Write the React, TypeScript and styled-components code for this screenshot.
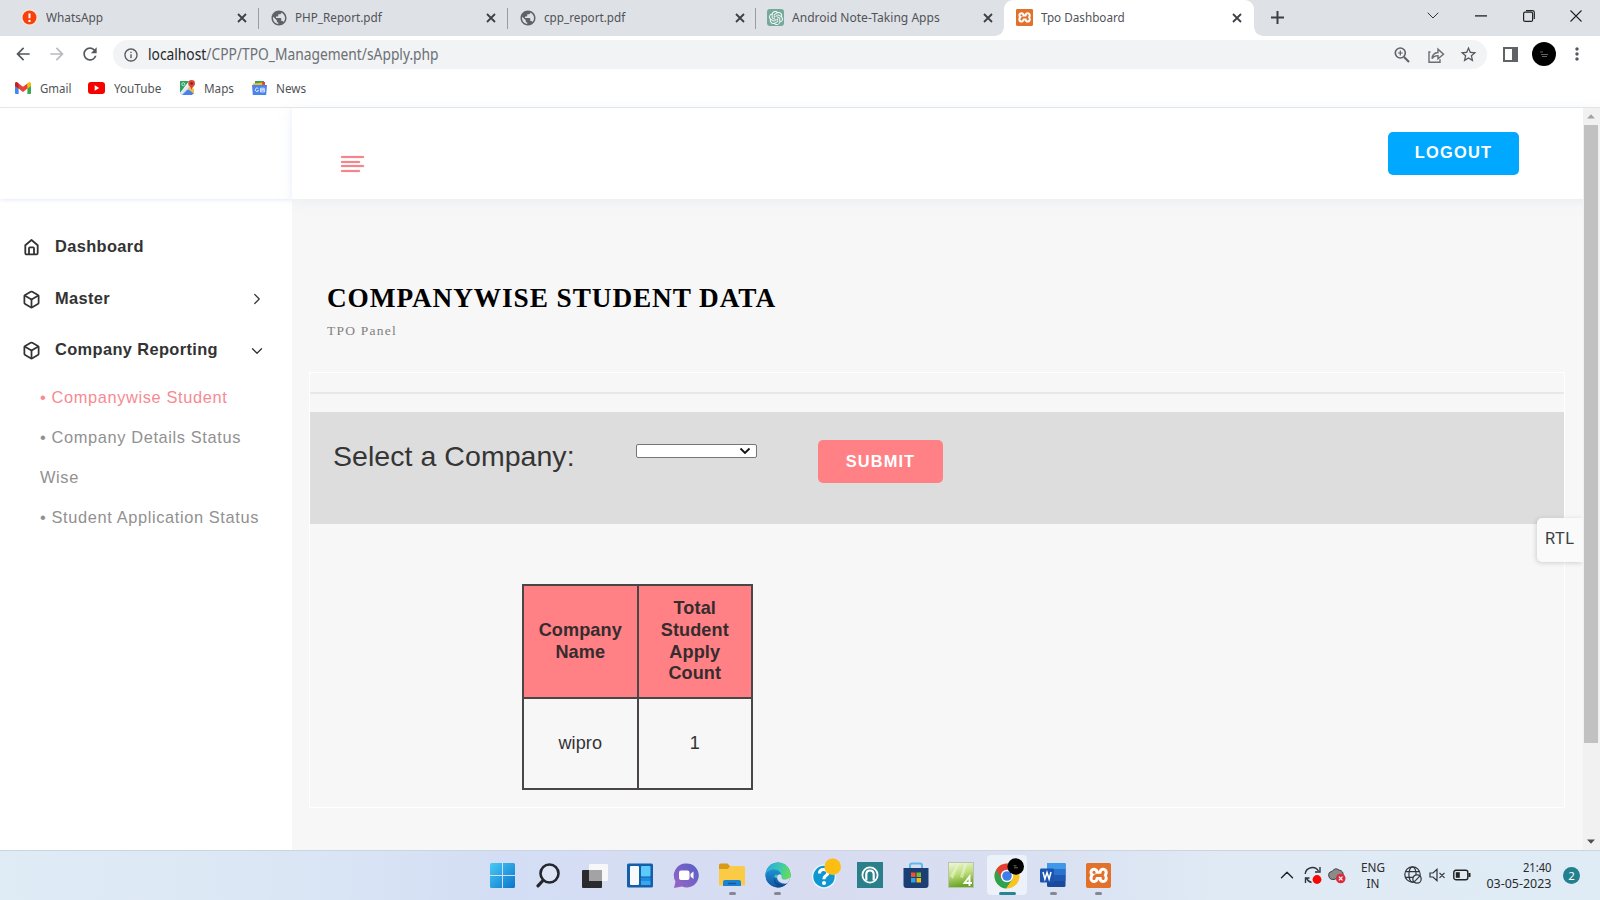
import React from "react";
import styled, { createGlobalStyle, css } from "styled-components";
import { Box, ChevronDown, ChevronRight, ChevronUp } from "lucide-react";
import { MdPublic, MdRefresh, MdArrowBack, MdArrowForward, MdInfoOutline, MdMoreVert, MdStarOutline } from "react-icons/md";
import { SiOpenai, SiXampp } from "react-icons/si";

const ui = `"Noto Sans", "Open Sans", sans-serif`;
const arial = `"Liberation Sans", Arial, sans-serif`;
const times = `"Liberation Serif", "Times New Roman", serif`;

const Global = createGlobalStyle`
  * { box-sizing: border-box; }
  html, body { margin: 0; padding: 0; background: #fff; overflow: hidden; }
  svg { display: block; flex: none; }
`;

const Screen = styled.div`
  width: 1600px;
  height: 900px;
  display: flex;
  flex-direction: column;
  overflow: hidden;
  font-family: ${arial};
  color: #333;
`;

const UiText = styled.span<{ $size?: number; $squeeze?: number }>`
  display: block;
  font-family: ${ui};
  font-size: ${(p) => p.$size ?? 13}px;
  line-height: 18px;
  white-space: nowrap;
  color: #505357;
  transform: scaleX(${(p) => p.$squeeze ?? 0.9});
  transform-origin: left center;
`;

/* ---------- browser chrome ---------- */

const TabStrip = styled.header`
  height: 36px;
  flex: none;
  display: flex;
  background: #dee1e6;
`;

const Tab = styled.div<{ $width: number; $active?: boolean; $divider?: boolean }>`
  position: relative;
  width: ${(p) => p.$width}px;
  display: flex;
  align-items: center;
  flex: none;
  padding-bottom: 1px;
  ${(p) => p.$divider && css`
    &::after {
      content: "";
      position: absolute;
      right: 0;
      top: 8px;
      width: 1px;
      height: 21px;
      background: #9a9da2;
    }
  `}
  ${(p) => p.$active && css`
    background: #fff;
    border-radius: 9px 9px 0 0;
    &::before, &::after {
      content: "";
      position: absolute;
      bottom: 0;
      width: 9px;
      height: 9px;
    }
    &::before { left: -9px; background: radial-gradient(circle at 0 0, transparent 8.5px, #fff 9px); }
    &::after { right: -9px; background: radial-gradient(circle at 100% 0, transparent 8.5px, #fff 9px); }
  `}
`;

const Favicon = styled.span<{ $left: number }>`
  width: 17px;
  margin-left: ${(p) => p.$left}px;
  display: flex;
  justify-content: center;
  flex: none;
  color: #5f6368;
`;

const TabTitle = styled(UiText)`
  margin-left: 8px;
  padding-bottom: 2px;
  flex: 1;
  min-width: 0;
`;

const TabClose = styled.span<{ $right: number }>`
  margin-right: ${(p) => p.$right}px;
  flex: none;
`;

const GreenTile = styled.span`
  width: 17px;
  height: 17px;
  display: flex;
  align-items: center;
  justify-content: center;
  border-radius: 3px;
  background: #75a99a;
  color: #fff;
`;

const OrangeTile = styled.span<{ $size: number }>`
  width: ${(p) => p.$size}px;
  height: ${(p) => p.$size}px;
  display: flex;
  align-items: center;
  justify-content: center;
  border-radius: 2px;
  background: #fff;
  color: #e2712b;
  box-shadow: inset 0 0 0 2px #e2712b;
`;

const NewTab = styled.div`
  width: 46px;
  padding-bottom: 1px;
  display: flex;
  align-items: center;
  justify-content: center;
`;

const WindowButtons = styled.div`
  margin-left: auto;
  display: flex;
  height: 31px;
`;

const WindowButton = styled.div`
  width: 47.6px;
  display: flex;
  align-items: center;
  justify-content: center;
`;

const Toolbar = styled.div`
  height: 36px;
  flex: none;
  display: flex;
  align-items: center;
  background: #fff;
  color: #55585d;
`;

const NavButtons = styled.div`
  width: 113px;
  display: flex;
  align-items: center;
  padding-left: 13px;
  gap: 13.5px;
`;

const Omnibox = styled.div`
  width: 1374px;
  height: 29px;
  margin-top: 1px;
  border-radius: 15px;
  background: #f1f3f4;
  display: flex;
  align-items: center;
  padding: 0 9px 0 10px;
`;

const Url = styled(UiText)`
  margin-left: 9px;
  padding-bottom: 1px;
  flex: 1;
  color: #6c7075;
  b { font-weight: 400; color: #25282c; }
`;

const OmniActions = styled.div`
  display: flex;
  align-items: center;
  gap: 14px;
  svg:first-child { margin-right: 2px; }
`;

const ToolbarEnd = styled.div`
  flex: 1;
  display: flex;
  align-items: center;
  padding-left: 16px;
`;

const Avatar = styled.div`
  width: 24px;
  height: 24px;
  margin-left: 14px;
  margin-right: 11px;
  border-radius: 50%;
  background: #000;
  color: #aaa;
  display: flex;
  align-items: center;
  justify-content: center;
`;

const Bookmarks = styled.nav`
  height: 36px;
  flex: none;
  display: flex;
  align-items: center;
  padding: 0 0 4px 15px;
  border-bottom: 1px solid #e6e7e8;
  background: #fff;
`;

const Bookmark = styled.div<{ $width: number }>`
  width: ${(p) => p.$width}px;
  display: flex;
  align-items: center;
  gap: 8.5px;
`;

/* ---------- page ---------- */

const Page = styled.div`
  height: 742px;
  flex: none;
  display: flex;
  background: #f7f7f7;
`;

const Sidebar = styled.aside`
  width: 292px;
  flex: none;
  background: #fff;
  display: flex;
  flex-direction: column;
`;

const Brand = styled.div`
  height: 91px;
  flex: none;
  box-shadow: inset -4px 0 6px -3px #f6f8fd, 0 1px 4px 0 #e6eaf6;
`;

const Menu = styled.nav`
  padding: 21.5px 0 0 22px;
`;

const MenuItem = styled.div`
  height: 51.8px;
  display: flex;
  align-items: center;
  padding-right: 26px;
  font-size: 16.4px;
  font-weight: 700;
  letter-spacing: 0.37px;
  color: #333;
  svg { margin-top: 2px; }
`;

const MenuIcon = styled.span`
  width: 33px;
  flex: none;
`;

const MenuLabel = styled.span`
  flex: 1;
`;

const SubMenu = styled.ul`
  list-style: none;
  margin: 0;
  padding: 0.9px 0 0 18px;
  width: 245px;
`;

const SubItem = styled.li<{ $active?: boolean }>`
  font-size: 16.4px;
  line-height: 40px;
  letter-spacing: 0.62px;
  color: ${(p) => (p.$active ? "#f78a91" : "#919191")};
`;

const Main = styled.main`
  flex: 1;
  display: flex;
  flex-direction: column;
  position: relative;
`;

const TopBar = styled.div`
  height: 91px;
  flex: none;
  display: flex;
  justify-content: space-between;
  align-items: flex-start;
  padding: 24px 81px 0 49px;
  background: #fff;
  box-shadow: 0 2px 14px rgba(170, 184, 215, 0.15);
`;

const Hamburger = styled.div`
  display: flex;
  flex-direction: column;
  gap: 2.6px;
  padding-top: 24px;
  i { display: block; height: 2px; width: 23px; border-radius: 1px; background: #f4868b; box-shadow: 0 0 1px #f4868b; }
  i:nth-child(even) { width: 18.5px; }
`;

const Button = styled.button<{ $tone: string; $width: number; $spacing: number; $lift?: number }>`
  width: ${(p) => p.$width}px;
  height: 43px;
  border: 0;
  padding: 0 0 ${(p) => p.$lift ?? 1}px;
  border-radius: 5px;
  background: ${(p) => p.$tone};
  color: #fff;
  font: 700 16.4px ${arial};
  letter-spacing: ${(p) => p.$spacing}px;
`;

const Heading = styled.div`
  padding: 83px 0 0 35px;
  height: 173px;
  flex: none;
`;

const Title = styled.h1`
  margin: 0;
  font: 700 27.3px/32px ${times};
  letter-spacing: 0.91px;
  color: #000;
`;

const Subtitle = styled.p`
  margin: 9px 0 0;
  font: 13.5px/16px ${times};
  letter-spacing: 1.22px;
  color: #808080;
`;

const Card = styled.section`
  width: 1256px;
  height: 436px;
  margin-left: 17px;
  border: 1px solid #fff;
`;

const Rule = styled.hr`
  margin: 19px 0 18px;
  border: 0;
  height: 2px;
  background: #e8e8e8;
`;

const Filter = styled.form`
  height: 112px;
  background: #ddd;
  display: flex;
  align-items: flex-start;
  padding: 28px 0 0 23px;
`;

const FilterLabel = styled.label`
  width: 303px;
  font-size: 28.5px;
  line-height: 33px;
  letter-spacing: 0.05px;
  color: #353535;
`;

const SelectBox = styled.div`
  width: 121px;
  height: 14px;
  margin: 4px 61px 0 0;
  border: 1px solid #767676;
  border-radius: 2px;
  background: #fff;
  color: #000;
  display: flex;
  align-items: center;
  justify-content: flex-end;
  padding-right: 5px;
`;

const Table = styled.table`
  margin: 60px 0 0 212px;
  width: 231px;
  height: 206px;
  table-layout: fixed;
  border-collapse: collapse;
  font-size: 18.1px;
  line-height: 21.7px;
  text-align: center;
  letter-spacing: 0.1px;
  th, td { border: 2px solid #4a4646; padding: 0 18px; }
  th { height: 113px; padding: 0 14px; background: #ff8085; font-weight: 700; color: #352c2d; }
`;

const RtlToggle = styled.div`
  position: absolute;
  right: 17px;
  top: 410px;
  width: 46px;
  height: 44px;
  padding-left: 8px;
  border-radius: 5px 0 0 5px;
  background: #fafafa;
  box-shadow: -1px 1px 5px rgba(0, 0, 0, 0.16);
  font: 16.4px/42px Roboto, sans-serif;
  letter-spacing: 0.5px;
  color: #3d4145;
  clip-path: inset(-8px 0 -8px -8px);
`;

const ScrollBar = styled.div`
  position: absolute;
  right: 0;
  top: 0;
  width: 17px;
  height: 742px;
  padding: 6px 2px 6px 1px;
  background: #f1f1f1;
  display: flex;
  flex-direction: column;
  align-items: center;
`;

const ScrollThumb = styled.div`
  width: 14px;
  height: 618px;
  margin: 6px 0 auto;
  background: #c1c1c1;
`;

/* ---------- taskbar ---------- */

const Taskbar = styled.footer`
  height: 50px;
  flex: none;
  display: flex;
  padding-left: 480px;
  border-top: 1px solid #ccd4df;
  background: linear-gradient(90deg, #dfebf5 0%, #dce7f5 16%, #d3def4 31%, #d8dcf1 52%, #d9e0f1 64%, #dfeaf5 76%, #dfebf5 100%);
`;

const Apps = styled.div`
  display: flex;
  padding-bottom: 1px;
`;

const AppSlot = styled.div<{ $open?: boolean; $current?: boolean }>`
  position: relative;
  width: 45.85px;
  display: flex;
  align-items: center;
  justify-content: center;
  ${(p) => p.$current && css`
    &::before {
      content: "";
      position: absolute;
      inset: 4px 3px 4px;
      border-radius: 4px;
      background: #edf1fa;
    }
  `}
  ${(p) => (p.$open || p.$current) && css`
    &::after {
      content: "";
      position: absolute;
      left: 50%;
      bottom: 4px;
      height: 3px;
      width: ${p.$current ? 17 : 7}px;
      margin-left: ${p.$current ? -8.5 : -3.5}px;
      border-radius: 2px;
      background: ${p.$current ? "#2a8592" : "#858894"};
    }
  `}
  svg { position: relative; }
`;

const Tray = styled.div`
  margin-left: auto;
  width: 330px;
  display: flex;
  align-items: center;
  padding-bottom: 1px;
  color: #222;
`;

const TraySlot = styled.div<{ $width: number }>`
  width: ${(p) => p.$width}px;
  flex: none;
  display: flex;
  justify-content: center;
`;

const TrayLines = styled.div<{ $width: number; $align: "center" | "right" }>`
  width: ${(p) => p.$width}px;
  flex: none;
  text-align: ${(p) => p.$align};
  span { color: #2b2b2b; line-height: 16.5px; transform-origin: ${(p) => p.$align} center; }
`;

const Badge = styled.div`
  width: 17px;
  height: 17px;
  margin-left: 11.5px;
  border-radius: 50%;
  background: #23808d;
  color: #fff;
  font: 11.5px/17px ${ui};
  text-align: center;
`;

/* ---------- drawings ---------- */

const Cross = () => (
  <svg width="10" height="10" viewBox="0 0 10 10" stroke="#3c4043" strokeWidth="1.8"><path d="M1 1l8 8M9 1l-8 8" /></svg>
);

const Alert = () => (
  <svg width="17" height="17" viewBox="0 0 17 17">
    <circle cx="8.5" cy="8.5" r="8.3" fill="#fbe6e1" /><circle cx="8.5" cy="8.5" r="7" fill="#f8400c" />
    <path d="M8.5 4.4v4.8" stroke="#fff" strokeWidth="2" /><circle cx="8.5" cy="11.9" r="1.2" fill="#fff" />
  </svg>
);

const Xampp = ({ size }: { size: number }) => (
  <OrangeTile $size={size}><SiXampp size={size} /></OrangeTile>
);

const Gmail = () => (
  <svg width="16" height="12" viewBox="0 0 16 12">
    <path d="M0 1.5V11q0 1 1 1h2.6V4z" fill="#4285f4" /><path d="M16 1.5V11q0 1-1 1h-2.6V4z" fill="#34a853" />
    <path d="M12.4 1.2L14 .2q2-.5 2 1.8v2l-3.6 2.7z" fill="#fbbc04" />
    <path d="M0 4V2Q0-.3 2 .2l6 4.6L12.4 1.4v5.2L8 10 3.6 6.6z" fill="#ea4335" /><path d="M0 4V2Q0 .2 1.6.1L3.6 1.6v5z" fill="#c5221f" />
  </svg>
);

const YouTube = () => (
  <svg width="17" height="12" viewBox="0 0 17 12"><rect width="17" height="12" rx="3" fill="#f60000" /><path d="M6.7 3.3v5.4L11.2 6z" fill="#fff" /></svg>
);

const Maps = () => (
  <svg width="15" height="15" viewBox="0 0 15 15">
    <path d="M0 1h9L0 13z" fill="#2da160" /><path d="M0 14L8 6l6 8z" fill="#4a80ee" /><path d="M0 13l9-9 2 3-8 8H1z" fill="#dfe6ef" />
    <path d="M2 15l5.5-5.4L13 15z" fill="#4a80ee" /><path d="M9 7l5 2v4.5L7.8 9z" fill="#f4c136" />
    <path d="M11.6 0a3.4 3.4 0 0 1 3.4 3.4C15 6 12.2 6.6 11.6 10 11 6.6 8.2 6 8.2 3.4A3.4 3.4 0 0 1 11.6 0z" fill="#dc4437" />
    <circle cx="11.6" cy="3.4" r="1.2" fill="#7d1f18" /><circle cx="3.3" cy="4.2" r="1.5" fill="none" stroke="#cfeeda" strokeWidth=".9" />
  </svg>
);

const News = () => (
  <svg width="15" height="14" viewBox="0 0 15 14">
    <rect x="3" y="0" width="9" height="6" fill="#2fa45c" /><rect x="9" y="1" width="4" height="4" fill="#ea4335" /><path d="M1 2.5l9-1 .5 4H1z" fill="#f8bd1c" />
    <path d="M0 4h15l-.8 10H.8z" fill="#4c84ee" />
    <g fill="none" stroke="#d9e5ff" strokeWidth="1"><path d="M6.400 7.600a1.800 1.800 0 1 0 .300 1.900H5.300M8.500 7.200h3.800v1.700H8.500zM8.500 8.900h4v2h-4z" /></g>
  </svg>
);

const House = () => (
  <svg width="18" height="19" viewBox="-1 0 18 19" fill="none" stroke="#333" strokeWidth="1.8" strokeLinejoin="round">
    <path d="M2.300 7.200L8.500 2l6.200 5.200V15q0 1.400-1.400 1.400H3.700Q2.300 16.400 2.300 15z" /><path d="M6 16V10.300q0-1 1-1h3q1 0 1 1V16" />
  </svg>
);

const Magnifier = () => (
  <svg width="18" height="18" viewBox="0 0 18 18" fill="none" stroke="#5f6368" strokeWidth="1.600">
    <circle cx="7.300" cy="7" r="5" /><path d="M11 11l5 5" strokeWidth="2.100" /><path d="M7.300 4.600v4.800M4.900 7h4.800" strokeWidth="1.200" />
  </svg>
);

const Share = () => (
  <svg width="18" height="18" viewBox="0 0 18 18" fill="none" stroke="#6a6e73" strokeWidth="1.400">
    <path d="M3.500 6H2v10.200h11v-3" /><path d="M5 12.500Q5.500 7 11 6.500V3.200l5.500 5-5.500 4.600V9.600Q7 9.500 5 12.500z" />
  </svg>
);

const SidePanel = () => (
  <svg width="15" height="15" viewBox="0 0 15 15"><path d="M1 1h13v13H1z" fill="none" stroke="#5f6368" strokeWidth="2" /><path d="M9 1h5v13H9z" fill="#5f6368" /></svg>
);

const Start = () => (
  <svg width="25" height="25" viewBox="0 0 25 25">
    <defs><linearGradient id="win" x1="0" y1="0" x2="25" y2="25" gradientUnits="userSpaceOnUse"><stop offset="0" stopColor="#48cbf5" /><stop offset="1" stopColor="#0b74cb" /></linearGradient></defs>
    <path d="M1.500 0H12v12H0V1.500Q0 0 1.500 0zM13 0h10.500Q25 0 25 1.500V12H13zM0 13h12v12H1.500Q0 25 0 23.500zM13 13h12v10.500q0 1.500-1.500 1.500H13z" fill="url(#win)" />
  </svg>
);

const Search = () => (
  <svg width="25" height="25" viewBox="0 0 25 25" fill="none" stroke="#24272d" strokeLinecap="round">
    <circle cx="13.500" cy="10.500" r="9" fill="#dfe5f4" strokeWidth="2.600" /><path d="M7 17.500L2 22.800" strokeWidth="3.200" />
  </svg>
);

const TaskView = () => (
  <svg width="26" height="25" viewBox="0 0 26 25">
    <rect x="0" y="7" width="20" height="18" rx="1" fill="#2b2b2d" /><rect x="7" y="1" width="19" height="17" rx="1" fill="#f7f7f8" /><path d="M7 7h13v11H7z" fill="#a3a3a6" />
  </svg>
);

const Widgets = () => (
  <svg width="26" height="25" viewBox="0 0 26 25">
    <rect width="26" height="24" y=".5" rx="1.500" fill="#155fa8" /><rect x="3" y="3" width="9" height="19" rx="1" fill="#f8f9fb" />
    <rect x="14" y="3" width="9.500" height="10.500" rx="1" fill="#5ccbfb" /><rect x="14" y="14.500" width="9.500" height="3.500" fill="#1c8de0" /><rect x="14" y="18" width="9.500" height="4" fill="#38a8ee" />
  </svg>
);

const Chat = () => (
  <svg width="26" height="25" viewBox="0 0 26 25">
    <defs><linearGradient id="chat" x1="0" y1="1" x2="1" y2="0"><stop offset="0" stopColor="#9a64c6" /><stop offset="1" stopColor="#5560c4" /></linearGradient></defs>
    <path d="M13 .500a12 12 0 1 1-4 23L1 25l1.500-6.500A12 12 0 0 1 13 .500z" fill="url(#chat)" />
    <rect x="6" y="7.500" width="10.500" height="9.500" rx="2" fill="#fff" /><path d="M17.500 11l3-2.500v7.500l-3-2.500z" fill="#fff" />
  </svg>
);

const Folder = () => (
  <svg width="26" height="24" viewBox="0 0 26 24">
    <path d="M0 2Q0 .500 1.500.500h7L11 3h13.500v6H0z" fill="#d99a16" /><path d="M0 6h9l2-3h13.500Q26 3 26 4.500v18H0z" fill="#fbcb48" />
    <path d="M4 23V19q0-2 2-2h14q2 0 2 2v4z" fill="#1b82d2" /><path d="M9 20.500h8" stroke="#125a9c" strokeWidth="1.500" />
  </svg>
);

const Edge = () => (
  <svg width="26" height="26" viewBox="0 0 26 26">
    <defs>
      <linearGradient id="edgeTop" x1="0" y1=".3" x2="1" y2=".5"><stop offset="0" stopColor="#27a9e0" /><stop offset=".6" stopColor="#3ecba8" /><stop offset="1" stopColor="#68dd54" /></linearGradient>
      <linearGradient id="edgeBody" x1="0" y1="0" x2="0" y2="1"><stop offset="0" stopColor="#1f90d8" /><stop offset="1" stopColor="#1256a3" /></linearGradient>
      <clipPath id="edgeClip"><circle cx="13" cy="13" r="12.500" /></clipPath>
    </defs>
    <g clipPath="url(#edgeClip)">
      <path d="M0 0h26v26H0z" fill="url(#edgeBody)" />
      <path d="M10.500 12c-3 5 1 11 8 10.500l6-2V26H12L8 21z" fill="#114b8f" />
      <path d="M0 12.500C1 4 7 0 13.500 0H26v17H15z" fill="url(#edgeTop)" />
      <path d="M0 13.500c1-3.500 4.500-6 9.300-6 4.500 0 7.200 3 6.900 6.500l-5.700-1.500c-3 3-2 8 1.500 11.500L5 25 0 20z" fill="url(#edgeBody)" />
      <path d="M26 20c-3.500 2.200-8.500 2.300-11.800-.300-2.500-2-2.700-4.800-1-6.900 1.600-1.400 4-.200 3.300 2.200-.7 2.500 4 3.400 9.500.500z" fill="#d7ddf2" />
    </g>
  </svg>
);

const Help = () => (
  <svg width="34" height="34" viewBox="0 0 34 34">
    <circle cx="17" cy="18.500" r="12" fill="#eef7fc" /><circle cx="17" cy="18.500" r="10.700" fill="#0f97d2" />
    <path d="M12.500 15.500q0-4 4.200-4t4.200 3.400q0 1.800-2.200 3-1.800 1-1.800 3.300" fill="none" stroke="#fff" strokeWidth="3.200" /><circle cx="17" cy="25" r="2" fill="#fff" />
    <circle cx="25.700" cy="8.700" r="8.300" fill="#fdbd13" />
  </svg>
);

const Ring = () => (
  <svg width="26" height="26" viewBox="0 0 26 26">
    <rect width="26" height="26" fill="#2a7f8a" /><circle cx="13" cy="13" r="7.600" fill="none" stroke="#fff" strokeWidth="1.800" />
    <path d="M9.300 18.500V12.500q0-4 3.700-4t3.700 4v6" fill="none" stroke="#fff" strokeWidth="2.200" />
  </svg>
);

const Store = () => (
  <svg width="26" height="27" viewBox="0 0 26 27">
    <path d="M7 7V3.500Q7 1.500 9 1.500h8q2 0 2 2V7" fill="none" stroke="#5cb9ec" strokeWidth="2" /><path d="M.500 6h25v17q0 3-3 3h-19q-3 0-3-3z" fill="#1b3f74" />
    <path d="M8 10.500h4.500V15H8z" fill="#f0512a" /><path d="M13.500 10.500H18V15h-4.500z" fill="#7eb92d" /><path d="M8 16h4.500v4.500H8z" fill="#2ba5e6" /><path d="M13.500 16H18v4.500h-4.500z" fill="#fbb917" />
  </svg>
);

const Four = () => (
  <svg width="26" height="26" viewBox="0 0 26 26">
    <defs><linearGradient id="leaf" x1="0" y1="0" x2=".2" y2="1"><stop offset="0" stopColor="#f1f8dd" /><stop offset=".5" stopColor="#bfdf7c" /><stop offset="1" stopColor="#6aa524" /></linearGradient></defs>
    <rect x=".5" y=".5" width="25" height="25" fill="url(#leaf)" stroke="#b9c2b4" />
    <path d="M2 14L10 1h1L5 17zM12 15L17 1h2l-4 15z" fill="#f4fae4" opacity=".5" />
    <path d="M21.500 24V14.500l-5 6.500H24" fill="none" stroke="#fff" strokeWidth="1.900" />
  </svg>
);

const Chrome = () => (
  <svg width="34" height="34" viewBox="0 0 34 34">
    <g transform="translate(4 5)">
      <circle cx="13" cy="13" r="12.500" fill="#f9c320" /><path d="M13 13L2.200 6.700A12.500 12.500 0 0 0 12 25.500l6.500-9.500z" fill="#2da24f" />
      <path d="M13 7h11a12.500 12.500 0 0 0-21.800-.300l5.300 9.200z" fill="#e24032" /><circle cx="13" cy="13" r="6.200" fill="#fff" /><circle cx="13" cy="13" r="4.800" fill="#3f7ee8" />
    </g>
    <circle cx="25.700" cy="8.500" r="8.300" fill="#000" /><path d="M23.500 7.800h3M24 9.800h4" stroke="#888" strokeWidth=".8" />
  </svg>
);

const Word = () => (
  <svg width="26" height="26" viewBox="0 0 26 26">
    <rect x="7" y="1" width="18.500" height="24" rx="1.500" fill="#1a4a9e" /><path d="M7 1h18.500v6H7z" fill="#3f98e8" /><path d="M7 7h18.500v6H7z" fill="#2a72cc" /><path d="M7 13h18.500v6H7z" fill="#1d5ab4" />
    <rect x="0" y="6.500" width="14" height="14" rx="1.200" fill="#1b55b0" /><path d="M3 10l1.900 7L7 10.500 9.100 17 11 10" fill="none" stroke="#fff" strokeWidth="1.500" />
  </svg>
);

const Sync = () => (
  <svg width="18" height="18" viewBox="0 0 18 18" fill="none" stroke="#30343a" strokeWidth="1.400">
    <path d="M1.200 8A7.200 7.200 0 0 1 14.500 5M16 1v5h-5M7.500 16.500A7 7 0 0 1 2.500 12M1.500 17v-5h4" /><circle cx="13" cy="13.500" r="4.400" fill="#fb0404" stroke="none" />
  </svg>
);

const Cloud = () => (
  <svg width="18" height="18" viewBox="0 0 18 18">
    <path d="M1 11Q-.500 6 4 5.500 7 1 11 4q5 1 4 6L6 13.500q-4 .500-5-2.500z" fill="#8b8b8b" stroke="#424242" /><circle cx="12.700" cy="12.500" r="4.800" fill="#dc2b3a" />
    <path d="M10.900 10.700l3.600 3.600M14.500 10.700l-3.600 3.600" stroke="#fff" strokeWidth="1.200" />
  </svg>
);

const NoNetwork = () => (
  <svg width="18" height="18" viewBox="0 0 18 18" fill="none" stroke="#30343a" strokeWidth="1.200">
    <circle cx="8.500" cy="8.500" r="7.700" /><ellipse cx="8.500" cy="8.500" rx="3.600" ry="7.700" /><path d="M1.500 5.700h14M1.500 11.300h8" />
    <circle cx="13" cy="13" r="4.200" fill="#dfebf5" /><path d="M10.200 15.800l5.600-5.600" />
  </svg>
);

const Muted = () => (
  <svg width="17" height="14" viewBox="0 0 17 14" fill="none" stroke="#30343a" strokeWidth="1.200"><path d="M1 5h3l4-3.700v11.400L4 9H1zM10.500 4.800l5 5M15.500 4.800l-5 5" /></svg>
);

const Battery = () => (
  <svg width="18" height="12" viewBox="0 0 18 12"><rect x=".800" y="1.300" width="14" height="9.400" rx="2" fill="none" stroke="#222" strokeWidth="1.400" /><path d="M2.800 3.200h4v5.600h-4z" fill="#222" /><path d="M16.500 4v4" stroke="#222" strokeWidth="2" /></svg>
);

const Triangle = ({ down }: { down?: boolean }) => (
  <svg width="8" height="5" viewBox="0 0 8 5"><path d={down ? "M0 .500h8L4 4.800z" : "M0 4.500h8L4 .200z"} fill={down ? "#505050" : "#a3a3a3"} /></svg>
);

export default function App() {
  return (
    <Screen>
      <Global />
      <TabStrip>
        <Tab $width={259} $divider><Favicon $left={21}><Alert /></Favicon><TabTitle $squeeze={0.91}>WhatsApp</TabTitle><TabClose $right={12}><Cross /></TabClose></Tab>
        <Tab $width={249} $divider><Favicon $left={11}><MdPublic size={18} /></Favicon><TabTitle>PHP_Report.pdf</TabTitle><TabClose $right={12}><Cross /></TabClose></Tab>
        <Tab $width={248} $divider><Favicon $left={11}><MdPublic size={18} /></Favicon><TabTitle>cpp_report.pdf</TabTitle><TabClose $right={11}><Cross /></TabClose></Tab>
        <Tab $width={248}><Favicon $left={11}><GreenTile><SiOpenai size={14} /></GreenTile></Favicon><TabTitle $squeeze={0.928}>Android Note-Taking Apps</TabTitle><TabClose $right={11}><Cross /></TabClose></Tab>
        <Tab $width={250} $active><Favicon $left={12}><Xampp size={17} /></Favicon><TabTitle>Tpo Dashboard</TabTitle><TabClose $right={12}><Cross /></TabClose></Tab>
        <NewTab><svg width="13" height="13" viewBox="0 0 13 13" stroke="#3c4043" strokeWidth="2"><path d="M6.500 0v13M0 6.500h13" /></svg></NewTab>
        <WindowButtons>
          <WindowButton><svg width="12" height="7" viewBox="0 0 12 7" fill="none" stroke="#333"><path d="M.700.700L6 6 11.300.700" /></svg></WindowButton>
          <WindowButton><svg width="12" height="2" viewBox="0 0 12 2"><path d="M0 .300h12v1.200H0z" fill="#111" /></svg></WindowButton>
          <WindowButton><svg width="12" height="12" viewBox="0 0 12 12" fill="none" stroke="#222" strokeWidth="1.200"><rect x=".600" y="2.200" width="9" height="9.200" rx="1.500" /><path d="M3 .700h6.500q1.800 0 1.800 1.800V9" /></svg></WindowButton>
          <WindowButton><svg width="12" height="12" viewBox="0 0 12 12" stroke="#222" strokeWidth="1.100"><path d="M.500.500l11 11M11.500.500l-11 11" /></svg></WindowButton>
        </WindowButtons>
      </TabStrip>
      <Toolbar>
        <NavButtons><MdArrowBack size={20} /><MdArrowForward size={20} color="#b9bbbe" /><MdRefresh size={20} /></NavButtons>
        <Omnibox>
          <MdInfoOutline size={16} />
          <Url $size={15.5} $squeeze={0.89}><b>localhost</b>/CPP/TPO_Management/sApply.php</Url>
          <OmniActions><Magnifier /><Share /><MdStarOutline size={19} /></OmniActions>
        </Omnibox>
        <ToolbarEnd>
          <SidePanel />
          <Avatar><svg width="9" height="6" viewBox="0 0 9 6" stroke="currentColor"><path d="M0 1h3M1 3.500h7M2 5.500h5" strokeWidth=".6" /></svg></Avatar>
          <MdMoreVert size={20} />
        </ToolbarEnd>
      </Toolbar>
      <Bookmarks>
        <Bookmark $width={73}><Gmail /><UiText $squeeze={0.88}>Gmail</UiText></Bookmark>
        <Bookmark $width={92}><YouTube /><UiText>YouTube</UiText></Bookmark>
        <Bookmark $width={72}><Maps /><UiText>Maps</UiText></Bookmark>
        <Bookmark $width={60}><News /><UiText>News</UiText></Bookmark>
      </Bookmarks>

      <Page>
        <Sidebar>
          <Brand />
          <Menu>
            <MenuItem><MenuIcon><House /></MenuIcon><MenuLabel>Dashboard</MenuLabel></MenuItem>
            <MenuItem><MenuIcon><Box size={19} strokeWidth={2.2} /></MenuIcon><MenuLabel>Master</MenuLabel><ChevronRight size={18} strokeWidth={1.6} /></MenuItem>
            <MenuItem><MenuIcon><Box size={19} strokeWidth={2.2} /></MenuIcon><MenuLabel>Company Reporting</MenuLabel><ChevronDown size={18} strokeWidth={1.7} /></MenuItem>
            <SubMenu>
              <SubItem $active>• Companywise Student</SubItem>
              <SubItem>• Company Details Status Wise</SubItem>
              <SubItem>• Student Application Status</SubItem>
            </SubMenu>
          </Menu>
        </Sidebar>
        <Main>
          <TopBar>
            <Hamburger><i /><i /><i /><i /></Hamburger>
            <Button type="button" $tone="#00a8ff" $width={131} $spacing={1.2} $lift={2}>LOGOUT</Button>
          </TopBar>
          <Heading><Title>COMPANYWISE STUDENT DATA</Title><Subtitle>TPO Panel</Subtitle></Heading>
          <Card>
            <Rule />
            <Filter>
              <FilterLabel>Select a Company:</FilterLabel>
              <SelectBox><svg width="12" height="8" viewBox="0 0 12 8" fill="none" stroke="#111" strokeWidth="1.8"><path d="M1.500 1.500L6 6l4.500-4.500" /></svg></SelectBox>
              <Button type="button" $tone="#ff8085" $width={125} $spacing={1.1}>SUBMIT</Button>
            </Filter>
            <Table>
              <thead><tr><th>Company Name</th><th>Total Student Apply Count</th></tr></thead>
              <tbody><tr><td>wipro</td><td>1</td></tr></tbody>
            </Table>
          </Card>
          <RtlToggle>RTL</RtlToggle>
          <ScrollBar><Triangle /><ScrollThumb /><Triangle down /></ScrollBar>
        </Main>
      </Page>

      <Taskbar>
        <Apps>
          <AppSlot><Start /></AppSlot>
          <AppSlot><Search /></AppSlot>
          <AppSlot><TaskView /></AppSlot>
          <AppSlot><Widgets /></AppSlot>
          <AppSlot><Chat /></AppSlot>
          <AppSlot $open><Folder /></AppSlot>
          <AppSlot $open><Edge /></AppSlot>
          <AppSlot><Help /></AppSlot>
          <AppSlot><Ring /></AppSlot>
          <AppSlot><Store /></AppSlot>
          <AppSlot><Four /></AppSlot>
          <AppSlot $current><Chrome /></AppSlot>
          <AppSlot $open><Word /></AppSlot>
          <AppSlot $open><Xampp size={25} /></AppSlot>
        </Apps>
        <Tray>
          <TraySlot $width={33}><ChevronUp size={22} strokeWidth={1.5} /></TraySlot>
          <TraySlot $width={19}><Sync /></TraySlot>
          <TraySlot $width={30}><Cloud /></TraySlot>
          <TrayLines $width={42} $align="center"><UiText>ENG</UiText><UiText>IN</UiText></TrayLines>
          <TraySlot $width={37}><NoNetwork /></TraySlot>
          <TraySlot $width={13}><Muted /></TraySlot>
          <TraySlot $width={36}><Battery /></TraySlot>
          <TrayLines $width={71.5} $align="right"><UiText $squeeze={0.86}>21:40</UiText><UiText $squeeze={0.958}>03-05-2023</UiText></TrayLines>
          <Badge>2</Badge>
        </Tray>
      </Taskbar>
    </Screen>
  );
}
